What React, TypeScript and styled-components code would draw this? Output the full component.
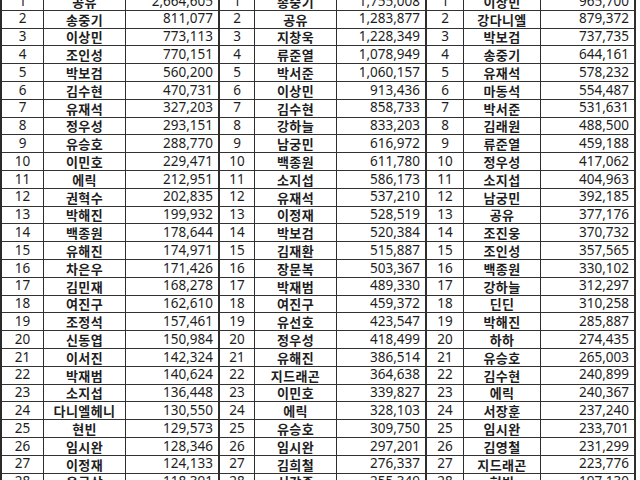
import React from "react";
import styled, { createGlobalStyle } from "styled-components";

const Global = createGlobalStyle`
  html, body { margin: 0; padding: 0; background: #ffffff; overflow: hidden; }
  body { width: 640px; height: 480px; }
`;

type Entry = [string, string];

const group1: Entry[] = [
  ["공유", "2,664,605"], ["송중기", "811,077"], ["이상민", "773,113"], ["조인성", "770,151"],
  ["박보검", "560,200"], ["김수현", "470,731"], ["유재석", "327,203"], ["정우성", "293,151"],
  ["유승호", "288,770"], ["이민호", "229,471"], ["에릭", "212,951"], ["권혁수", "202,835"],
  ["박해진", "199,932"], ["백종원", "178,644"], ["유해진", "174,971"], ["차은우", "171,426"],
  ["김민재", "168,278"], ["여진구", "162,610"], ["조정석", "157,461"], ["신동엽", "150,984"],
  ["이서진", "142,324"], ["박재범", "140,624"], ["소지섭", "136,448"], ["다니엘헤니", "130,550"],
  ["현빈", "129,573"], ["임시완", "128,346"], ["이정재", "124,133"], ["윤균상", "118,391"],
];

const group2: Entry[] = [
  ["송중기", "1,755,008"], ["공유", "1,283,877"], ["지창욱", "1,228,349"], ["류준열", "1,078,949"],
  ["박서준", "1,060,157"], ["이상민", "913,436"], ["김수현", "858,733"], ["강하늘", "833,203"],
  ["남궁민", "616,972"], ["백종원", "611,780"], ["소지섭", "586,173"], ["유재석", "537,210"],
  ["이정재", "528,519"], ["박보검", "520,384"], ["김재환", "515,887"], ["장문복", "503,367"],
  ["박재범", "489,330"], ["여진구", "459,372"], ["유선호", "423,547"], ["정우성", "418,499"],
  ["유해진", "386,514"], ["지드래곤", "364,638"], ["이민호", "339,827"], ["에릭", "328,103"],
  ["유승호", "309,750"], ["임시완", "297,201"], ["김희철", "276,337"], ["서강준", "255,349"],
];

const group3: Entry[] = [
  ["이상민", "965,700"], ["강다니엘", "879,372"], ["박보검", "737,735"], ["송중기", "644,161"],
  ["유재석", "578,232"], ["마동석", "554,487"], ["박서준", "531,631"], ["김래원", "488,500"],
  ["류준열", "459,188"], ["정우성", "417,062"], ["소지섭", "404,963"], ["남궁민", "392,185"],
  ["공유", "377,176"], ["조진웅", "370,732"], ["조인성", "357,565"], ["백종원", "330,102"],
  ["강하늘", "312,297"], ["딘딘", "310,258"], ["박해진", "285,887"], ["하하", "274,435"],
  ["유승호", "265,003"], ["김수현", "240,899"], ["에릭", "240,367"], ["서장훈", "237,240"],
  ["임시완", "233,701"], ["김영철", "231,299"], ["지드래곤", "223,776"], ["현빈", "197,130"],
];

const groups = [group1, group2, group3];

const Page = styled.div`
  width: 640px;
  height: 480px;
  overflow: hidden;
  background: #ffffff;
`;

const Sheet = styled.div`
  display: grid;
  grid-template-columns: 42px 82px 94px 35px 82px 90px 37px 77px 95px;
  grid-auto-rows: 17.8px;
  margin-top: -7px;
  width: 634px;
  border-left: 2px solid #2a2a2a;
  box-sizing: border-box;
`;

const Cell = styled.div<{ $kind: "rank" | "name" | "num"; $groupEnd?: boolean }>`
  display: flex;
  align-items: center;
  justify-content: ${(p) => (p.$kind === "num" ? "flex-end" : "center")};
  padding-right: ${(p) => (p.$kind === "num" ? "5px" : "0")};
  box-sizing: border-box;
  border-bottom: 1px solid #333333;
  border-right: ${(p) => (p.$groupEnd ? "2px" : "1px")} solid #2e2e2e;
  color: #1e1e1e;
  white-space: nowrap;
  overflow: hidden;
  font-family: ${(p) =>
    p.$kind === "name"
      ? `"Noto Sans CJK KR", sans-serif`
      : `"Noto Sans", "Noto Sans CJK KR", sans-serif`};
  font-weight: ${(p) => (p.$kind === "name" ? 700 : 400)};
  font-size: ${(p) => (p.$kind === "name" ? "13px" : "13.5px")};
  letter-spacing: ${(p) => (p.$kind === "name" ? "0.4px" : "0")};
  line-height: 1;
`;

export default function App() {
  const rows = Array.from({ length: 28 }, (_, i) => i);
  return (
    <Page>
      <Global />
      <Sheet>
        {rows.map((i) =>
          groups.map((g, gi) => (
            <React.Fragment key={`${i}-${gi}`}>
              <Cell $kind="rank">{i + 1}</Cell>
              <Cell $kind="name">{g[i][0]}</Cell>
              <Cell $kind="num" $groupEnd>
                {g[i][1]}
              </Cell>
            </React.Fragment>
          ))
        )}
      </Sheet>
    </Page>
  );
}
